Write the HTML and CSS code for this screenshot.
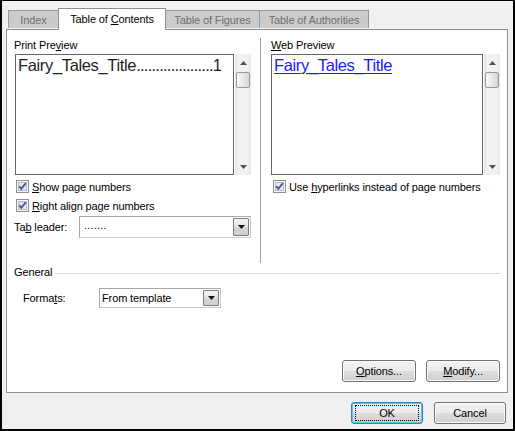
FILE: index.html
```html
<!DOCTYPE html>
<html>
<head>
<meta charset="utf-8">
<title>Table of Contents</title>
<link rel="stylesheet" href="styles.css">
</head>
<body>
<div class="window">
  <div class="tabs">
    <div class="tab t-index"><span>Index</span></div>
    <div class="tab active t-toc"><span>Table of <u>C</u>ontents</span></div>
    <div class="tab t-fig"><span>Table of Figures</span></div>
    <div class="tab t-auth"><span>Table of Authorities</span></div>
  </div>
  <div class="panel">
    <div class="top">
      <div class="col">
        <div class="label">Print Pre<u>v</u>iew</div>
        <div class="preview">
          <div class="pbox pbox-left">
            <div class="toc-line">Fairy_Tales_Title<span class="leader">....................</span>1</div>
          </div>
          <div class="sbar">
            <div class="sb-btn"><svg width="7" height="4" viewBox="0 0 7 4"><path d="M0 4 L3.5 0 L7 4 Z" fill="#505050"/></svg></div>
            <div class="thumb"></div>
            <div class="sb-fill"></div>
            <div class="sb-btn"><svg width="7" height="4" viewBox="0 0 7 4"><path d="M0 0 L3.5 4 L7 0 Z" fill="#505050"/></svg></div>
          </div>
        </div>
        <div class="check first">
          <svg class="cb" width="13" height="13" viewBox="0 0 13 13"><rect x="0.5" y="0.5" width="12" height="12" fill="#f6f6f6" stroke="#8e8f8f"/><rect x="2.5" y="2.5" width="8" height="8" fill="#e4e6ea" stroke="#b8bcc4"/><path d="M3.2 6.3 L5.3 8.9 L9.8 3.2" fill="none" stroke="#3d52a0" stroke-width="1.8"/></svg>
          <span><u>S</u>how page numbers</span>
        </div>
        <div class="check">
          <svg class="cb" width="13" height="13" viewBox="0 0 13 13"><rect x="0.5" y="0.5" width="12" height="12" fill="#f6f6f6" stroke="#8e8f8f"/><rect x="2.5" y="2.5" width="8" height="8" fill="#e4e6ea" stroke="#b8bcc4"/><path d="M3.2 6.3 L5.3 8.9 L9.8 3.2" fill="none" stroke="#3d52a0" stroke-width="1.8"/></svg>
          <span><u>R</u>ight align page numbers</span>
        </div>
        <div class="leader-row">
          <span class="lbl">Ta<u>b</u> leader:</span>
          <div class="combo combo-tl">
            <span class="val">.......</span>
            <span class="dd"><svg width="7" height="4" viewBox="0 0 7 4"><path d="M0 0 L3.5 4 L7 0 Z" fill="#111"/></svg></span>
          </div>
        </div>
      </div>
      <div class="vdiv"></div>
      <div class="col">
        <div class="label"><u>W</u>eb Preview</div>
        <div class="preview">
          <div class="pbox pbox-right">
            <span class="link">Fairy_Tales_Title</span>
          </div>
          <div class="sbar">
            <div class="sb-btn"><svg width="7" height="4" viewBox="0 0 7 4"><path d="M0 4 L3.5 0 L7 4 Z" fill="#505050"/></svg></div>
            <div class="thumb"></div>
            <div class="sb-fill"></div>
            <div class="sb-btn"><svg width="7" height="4" viewBox="0 0 7 4"><path d="M0 0 L3.5 4 L7 0 Z" fill="#505050"/></svg></div>
          </div>
        </div>
        <div class="check first">
          <svg class="cb" width="13" height="13" viewBox="0 0 13 13"><rect x="0.5" y="0.5" width="12" height="12" fill="#f6f6f6" stroke="#8e8f8f"/><rect x="2.5" y="2.5" width="8" height="8" fill="#e4e6ea" stroke="#b8bcc4"/><path d="M3.2 6.3 L5.3 8.9 L9.8 3.2" fill="none" stroke="#3d52a0" stroke-width="1.8"/></svg>
          <span>Use <u>h</u>yperlinks instead of page numbers</span>
        </div>
      </div>
    </div>
    <div class="group-head"><span>General</span><div class="hline"></div></div>
    <div class="formats-row">
      <span class="lbl2">Forma<u>t</u>s:</span>
      <div class="combo combo-fmt">
        <span class="val">From template</span>
        <span class="dd"><svg width="7" height="4" viewBox="0 0 7 4"><path d="M0 0 L3.5 4 L7 0 Z" fill="#111"/></svg></span>
      </div>
    </div>
    <div class="btn-row">
      <div class="btn btn-wide"><span><u>O</u>ptions...</span></div>
      <div class="btn btn-wide"><span><u>M</u>odify...</span></div>
    </div>
  </div>
  <div class="footer">
    <div class="btn btn-ok default"><span class="focus">OK</span></div>
    <div class="btn btn-ok"><span>Cancel</span></div>
  </div>
</div>
</body>
</html>
```

FILE: styles.css
```css
html, body {
  margin: 0;
  padding: 0;
  background: #f0f0f0;
}

.window {
  width: 515px;
  height: 431px;
  box-sizing: border-box;
  border: 2px solid #000;
  border-top-width: 1px;
  background: #f0f0f0;
  font-family: "Liberation Sans", Arial, sans-serif;
  font-size: 11px;
  letter-spacing: -0.12px;
  color: #000;
  display: flex;
  flex-direction: column;
}

u { text-decoration: underline; text-underline-offset: 1px; }

/* ---------- tabs ---------- */
.tabs {
  display: flex;
  align-items: flex-end;
  padding: 6px 0 0 6px;
  height: 22px;
}

.tab {
  box-sizing: border-box;
  height: 18px;
  margin-bottom: 1px;
  margin-left: -1px;
  border: 1px solid #979797;
  border-bottom: none;
  background: #cbcbcb;
  color: #6e6e6e;
  display: flex;
  align-items: center;
  justify-content: center;
  padding-top: 1px;
  white-space: nowrap;
}
.t-index { width: 51px; margin-left: 0; }
.t-toc { width: 108px; }
.t-fig { width: 95px; }
.t-auth { width: 110px; }

.tab.active {
  position: relative;
  z-index: 2;
  height: 22px;
  margin-bottom: -1px;
  background: #fff;
  color: #000;
  border-color: #8e8f8f;
  padding-top: 0;
  padding-bottom: 2px;
}

/* ---------- panel ---------- */
.panel {
  position: relative;
  z-index: 1;
  box-sizing: border-box;
  width: 502px;
  height: 364px;
  margin-left: 4px;
  border: 1px solid #8e8f8f;
  background: #fff;
  padding: 8px 6px 10px 7px;
  display: flex;
  flex-direction: column;
}

.top {
  display: grid;
  grid-template-columns: 246px 1px 239px;
  height: 225px;
}

.top > .col:first-child { margin-right: 9px; }
.top > .col:last-child { margin-left: 10px; }

.vdiv {
  background: #a0a0a0;
  width: 1px;
}

.label {
  margin-top: 1px;
  line-height: 13px;
  height: 13px;
  margin-bottom: 1px;
}

.preview {
  display: flex;
  margin-top: 2px;
  height: 121px;
  gap: 1px;
}

.pbox {
  box-sizing: border-box;
  height: 121px;
  border: 1px solid #666;
  background: #fff;
  padding: 0 2px;
  font-size: 16.5px;
  letter-spacing: -0.35px;
  line-height: 20px;
  color: #1e1e1e;
  white-space: nowrap;
}
.pbox-left { width: 219px; margin-left: 1px; }
.pbox-right { width: 212px; }

.toc-line .leader {
  letter-spacing: -0.75px;
}

.link {
  color: #1a1aff;
  text-decoration: underline;
  text-decoration-thickness: 1px;
  text-underline-offset: 2px;
}

.sbar {
  width: 16px;
  height: 121px;
  background: linear-gradient(90deg, #e6e6e6, #f2f2f2 25%, #f2f2f2 75%, #e8e8e8);
  display: flex;
  flex-direction: column;
  align-items: center;
}
.sb-btn {
  height: 17px;
  width: 16px;
  display: flex;
  align-items: center;
  justify-content: center;
}
.thumb {
  box-sizing: border-box;
  width: 14px;
  height: 16px;
  margin-top: 1px;
  border: 1px solid #979797;
  border-radius: 2px;
  background: linear-gradient(90deg, #f8f8f8, #e4e4e4 60%, #d4d4d4);
}
.sb-fill { flex: 1; }

/* ---------- checkboxes ---------- */
.check {
  display: flex;
  align-items: center;
  height: 19px;
  padding-left: 2px;
  gap: 3px;
}
.check.first { margin-top: 2px; }
.cb { flex: none; }

/* ---------- combos ---------- */
.leader-row {
  display: flex;
  align-items: center;
  margin-top: 1px;
}
.lbl { width: 65px; }

.combo {
  box-sizing: border-box;
  border: 1px solid #a7a7a7;
  border-right-color: #c9c9c9;
  border-bottom-color: #c9c9c9;
  background: #fff;
  display: flex;
  align-items: center;
  justify-content: space-between;
}
.combo-tl { width: 172px; height: 22px; padding-left: 4px; }
.combo-tl .val { padding-bottom: 4px; letter-spacing: 0.2px; }
.combo-fmt { width: 122px; height: 20px; padding-left: 2px; }

.dd {
  box-sizing: border-box;
  width: 16px;
  height: calc(100% - 2px);
  margin-right: 1px;
  border: 1px solid #7a7a7a;
  border-radius: 1px;
  background: linear-gradient(180deg, #f4f4f4, #e2e2e2 50%, #d6d6d6 51%, #cfcfcf);
  display: flex;
  align-items: center;
  justify-content: center;
}

/* ---------- general ---------- */
.group-head {
  margin-top: 3px;
  display: flex;
  align-items: center;
  line-height: 13px;
  height: 13px;
}
.hline {
  flex: 1;
  height: 1px;
  background: #d6dfe6;
  margin-left: 3px;
  margin-top: 1px;
}

.formats-row {
  display: flex;
  align-items: center;
  margin-top: 9px;
  padding-left: 9px;
}
.lbl2 { width: 76px; }

/* ---------- buttons ---------- */
.btn-row {
  margin-top: auto;
  display: flex;
  justify-content: flex-end;
  gap: 10px;
  padding-right: 1px;
}

.btn {
  box-sizing: border-box;
  height: 22px;
  border: 1px solid #707070;
  border-radius: 3px;
  background: linear-gradient(180deg, #f3f3f3 0%, #ebebeb 48%, #dddddd 52%, #cfcfcf 100%);
  box-shadow: inset 0 0 0 1px #fcfcfc;
  display: flex;
  align-items: center;
  justify-content: center;
}
.btn-wide { width: 74px; }
.btn-ok { width: 72px; }

.btn.default {
  border-color: #3c7fb1;
  box-shadow: inset 0 0 0 1px #48c7f5;
}
.focus {
  box-sizing: border-box;
  width: 64px;
  height: 16px;
  border: 1px dotted #000;
  display: flex;
  align-items: center;
  justify-content: center;
}

.footer {
  margin-top: 9px;
  display: flex;
  justify-content: flex-end;
  gap: 11px;
  padding-right: 7px;
}
```
